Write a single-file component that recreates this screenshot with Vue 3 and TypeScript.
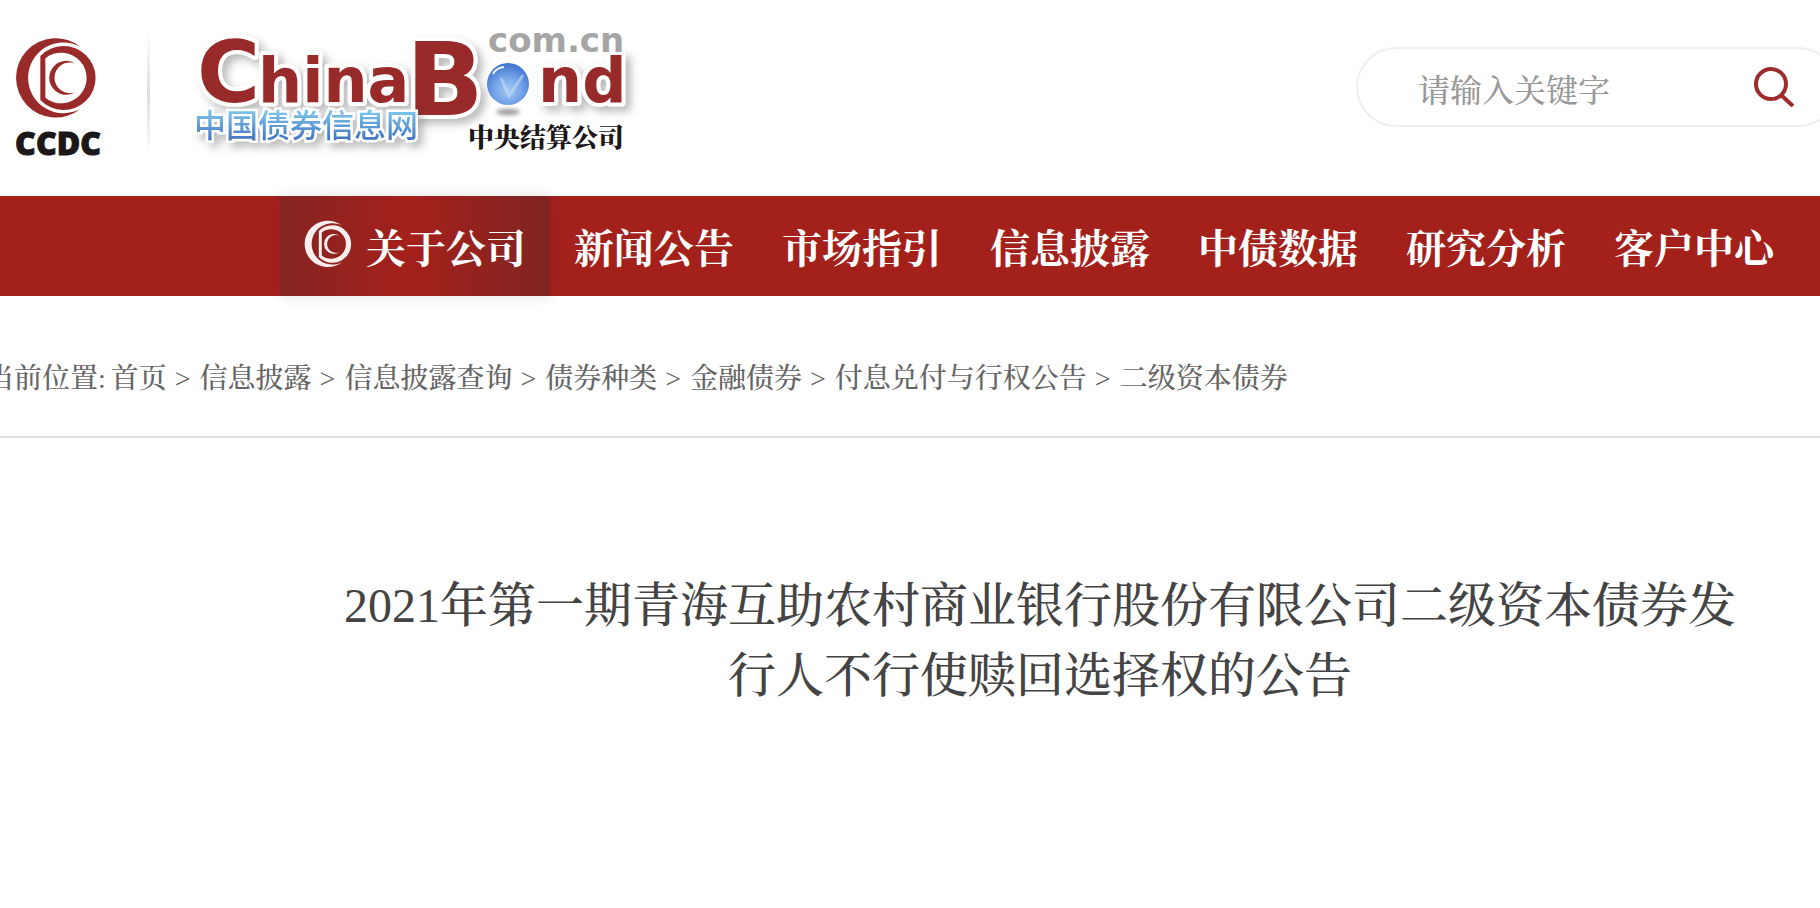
<script setup lang="ts">
import { ref } from 'vue'

const keyword = ref('')

const navItems: string[] = ['关于公司', '新闻公告', '市场指引', '信息披露', '中债数据', '研究分析', '客户中心']
const active = ref(0)

const crumbs: string[] = ['首页', '信息披露', '信息披露查询', '债券种类', '金融债券', '付息兑付与行权公告', '二级资本债券']

const ringOuter = 'M243 80A119 119 0 1 0 243 265A106 106 0 1 1 243 80Z'
const ringInner = 'M122 107A96 96 0 1 1 122 239ZM137 114V232A76 76 0 1 0 137 114Z'
const ringCore = 'M228 130A51 51 0 1 0 228 215A46 46 0 1 1 228 130Z'
</script>

<template>
  <div class="page">
    <header class="header">
      <div class="brand">
        <a class="ccdc" href="#" aria-label="CCDC">
          <svg class="ccdc-mark" viewBox="46 50 246 246" aria-hidden="true">
            <path :d="ringOuter" />
            <path :d="ringInner" fill-rule="evenodd" />
            <path :d="ringCore" />
          </svg>
          <span class="ccdc-name">CCDC</span>
        </a>
        <span class="divider"></span>
        <a class="chinabond" href="#" aria-label="ChinaBond 中国债券信息网">
          <svg viewBox="180 20 470 150" width="470" height="150">
            <defs>
              <linearGradient id="sky" x1="0" y1="0" x2="0" y2="1">
                <stop offset="0.2" stop-color="#80cbee" />
                <stop offset="1" stop-color="#3762b8" />
              </linearGradient>
              <radialGradient id="globe" cx="0.5" cy="0.65" r="0.6">
                <stop offset="0" stop-color="#a4cbf6" />
                <stop offset="0.6" stop-color="#6f9fe6" />
                <stop offset="1" stop-color="#4478d0" />
              </radialGradient>
              <filter id="lift" x="-10%" y="-20%" width="120%" height="150%">
                <feDropShadow dx="5" dy="5" stdDeviation="4" flood-color="#555" flood-opacity="0.4" />
              </filter>
              <filter id="soft" x="-30%" y="-100%" width="160%" height="300%">
                <feGaussianBlur stdDeviation="2" />
              </filter>
            </defs>
            <g class="word" filter="url(#lift)">
              <text x="195" y="102" font-size="86">C</text>
              <text x="256" y="102" font-size="62">hina</text>
              <text x="404" y="115" font-size="102">B</text>
              <text x="536" y="102" font-size="62">nd</text>
            </g>
            <text class="domain" x="486" y="52" font-size="34">com.cn</text>
            <ellipse cx="506" cy="112" rx="12" ry="3" fill="#666" opacity="0.7" filter="url(#soft)" />
            <circle cx="506" cy="84" r="21" fill="url(#globe)" />
            <path d="M499 78L507 96L521 75" fill="none" stroke="#c3dcf8" stroke-width="3" opacity="0.6" />
            <path d="M491 74Q494 68 502 67" fill="none" stroke="#e8f4ff" stroke-width="2" />
            <text class="site" filter="url(#lift)" x="192" y="137" font-size="32" fill="url(#sky)">中国债券信息网</text>
            <text class="company" x="466" y="147" font-size="26">中央结算公司</text>
          </svg>
        </a>
      </div>
      <form class="search" role="search" @submit.prevent>
        <input v-model="keyword" type="text" placeholder="请输入关键字" aria-label="请输入关键字" />
        <button type="submit" aria-label="搜索">
          <svg viewBox="0 0 40 40" width="40" height="40" aria-hidden="true">
            <circle cx="17" cy="17" r="15" />
            <path d="M27 28L39 39" />
          </svg>
        </button>
      </form>
    </header>

    <nav class="nav">
      <a
        v-for="(item, i) in navItems"
        :key="item"
        href="#"
        :class="{ active: i === active }"
        @click.prevent="active = i"
      >
        <svg v-if="i === active" viewBox="46 50 246 246" width="48" height="48" aria-hidden="true">
          <path :d="ringOuter" />
          <path :d="ringInner" fill-rule="evenodd" />
          <path :d="ringCore" />
        </svg>
        <span>{{ item }}</span>
      </a>
    </nav>

    <div class="crumbs">
      <span class="here">当前位置:</span>
      <template v-for="(c, i) in crumbs" :key="c">
        <span v-if="i > 0" class="sep">&gt;</span>
        <a href="#">{{ c }}</a>
      </template>
    </div>

    <main class="article">
      <h1>2021年第一期青海互助农村商业银行股份有限公司二级资本债券发行人不行使赎回选择权的公告</h1>
    </main>
  </div>
</template>

<style>
body {
  margin: 0;
  background: #fff;
}
</style>

<style scoped>
.page {
  overflow: hidden;
  min-height: 100vh;
  font-family: "Liberation Serif", "Noto Serif CJK SC", "Noto Sans CJK SC", serif;
  font-weight: 500;
  color: #444;
}
a {
  color: inherit;
  text-decoration: none;
}
.header {
  display: flex;
  justify-content: space-between;
  align-items: flex-start;
  height: 196px;
}
.brand {
  display: flex;
  padding-left: 15px;
}
.ccdc {
  display: flex;
  flex-direction: column;
  align-items: center;
  width: 86px;
  padding-top: 37px;
}
.ccdc-mark {
  width: 82px;
  height: 82px;
  margin-right: 4px;
  fill: #982a29;
}
.ccdc-name {
  margin-top: 8px;
  font: 800 32px/32px "Open Sans", sans-serif;
  color: #1c1718;
  -webkit-text-stroke: 1px #1c1718;
}
.divider {
  width: 3px;
  height: 124px;
  margin: 32px 32px 0 46px;
  background: linear-gradient(transparent, #ddd 50%, transparent);
}
.chinabond {
  height: 150px;
  padding-top: 20px;
}
.chinabond svg {
  display: block;
}
.word {
  font-family: "DejaVu Sans", sans-serif;
  font-weight: 700;
  fill: #982a29;
  stroke: #fff;
  stroke-width: 8px;
  stroke-linejoin: round;
  paint-order: stroke;
}
.domain {
  font-family: "DejaVu Sans", sans-serif;
  font-weight: 700;
  fill: #a5a5a5;
}
.site {
  font-family: "Noto Sans CJK SC", sans-serif;
  font-weight: 500;
  stroke: #fff;
  stroke-width: 5px;
  paint-order: stroke;
}
.company {
  font-family: "Noto Serif CJK SC", "Noto Sans CJK SC", serif;
  font-weight: 900;
  fill: #1c1718;
}
.search {
  display: flex;
  align-items: center;
  box-sizing: border-box;
  width: 482px;
  height: 80px;
  margin: 47px -18px 0 0;
  padding: 0 42px 0 60px;
  border: 2px solid #eee;
  border-radius: 40px;
}
.search input {
  flex: 1;
  min-width: 0;
  height: 60px;
  padding: 8px 0 0;
  border: 0;
  outline: 0;
  background: none;
  font: inherit;
  font-size: 32px;
  color: #444;
}
.search input::placeholder {
  color: #999;
}
.search button {
  padding: 0;
  border: 0;
  background: none;
  cursor: pointer;
}
.search svg {
  display: block;
  fill: none;
  stroke: #9c2d2c;
  stroke-width: 4;
}
.nav {
  display: flex;
  height: 100px;
  padding-left: 280px;
  background: #a3201b;
}
.nav a {
  display: flex;
  flex: none;
  align-items: center;
  gap: 14px;
  padding: 0 24px;
  font-size: 40px;
  font-weight: 700;
  line-height: 60px;
  color: #fff;
}
.nav a.active {
  background: linear-gradient(90deg, #852522, #a3201b 45%, #a3201b 50%, #802522);
  box-shadow: 0 0 12px rgba(90, 40, 40, 0.15);
}
.nav svg {
  margin-bottom: 4px;
  fill: #fbeeee;
}
.nav span {
  padding-top: 8px;
}
.crumbs {
  display: flex;
  height: 142px;
  box-sizing: border-box;
  margin-left: -14px;
  padding-top: 63px;
  border-bottom: 2px solid #e0e0e0;
  font-size: 28px;
  line-height: 40px;
  color: #666;
  white-space: nowrap;
}
.here {
  margin-right: 5px;
}
.sep {
  margin: 0 9px 0 8px;
}
.article {
  padding: 133px 0 0 260px;
}
h1 {
  max-width: 1400px;
  margin: 0 auto;
  font-size: 48px;
  font-weight: 500;
  line-height: 70px;
  text-align: center;
}
</style>
